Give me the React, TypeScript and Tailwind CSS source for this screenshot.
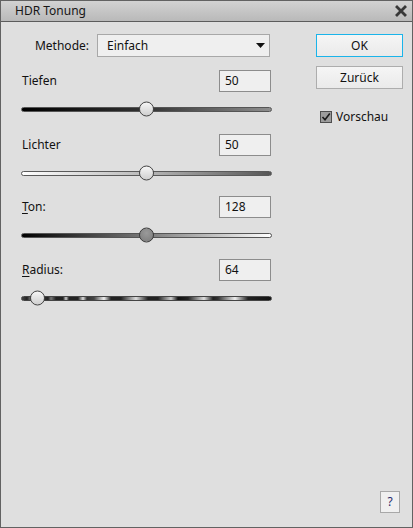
import React from "react";

const font = { fontFamily: '"Noto Sans", "Open Sans", sans-serif' };

function Thumb({ left, dark }: { left: number; dark?: boolean }) {
  return (
    <div
      className={
        "absolute top-1/2 -translate-y-1/2 w-[15px] h-[15px] rounded-full border " +
        (dark
          ? "border-[#3a3a3a] bg-[radial-gradient(circle_at_50%_35%,#9a9a9a,#7a7a7a)]"
          : "border-[#444] bg-[linear-gradient(to_bottom,#f6f6f6,#cfcfcf)]")
      }
      style={{ left }}
    />
  );
}

function Section({
  label,
  underline,
  value,
  trackClass,
  thumbLeft,
  darkThumb,
  mt,
}: {
  label: string;
  underline?: boolean;
  value: string;
  trackClass: string;
  thumbLeft: number;
  darkThumb?: boolean;
  mt: string;
}) {
  return (
    <div className={"flex flex-col " + mt}>
      <div className="flex items-center justify-between pr-[2px] h-[22px]">
        <span className="text-[12px] text-[#111] pl-[1px]">
          {underline ? (
            <>
              <span className="underline underline-offset-2">{label[0]}</span>
              {label.slice(1)}
            </>
          ) : (
            label
          )}
        </span>
        <div className="w-[52px] h-[22px] bg-[#efefef] border border-[#8c8c8c] text-[12px] text-[#111] pl-[5px] leading-[19px]">
          {value}
        </div>
      </div>
      <div className="relative h-[16px] mt-[9px] flex items-center">
        <div className={"w-[251px] h-[5px] rounded-full " + trackClass} />
        <Thumb left={thumbLeft} dark={darkThumb} />
      </div>
    </div>
  );
}

export default function App() {
  return (
    <div
      className="w-[413px] h-[528px] flex flex-col bg-[#dfdfdf] border border-[#626262] overflow-hidden"
      style={font}
    >
      {/* Title bar */}
      <div className="h-[21px] shrink-0 flex items-center justify-between bg-[linear-gradient(to_bottom,#d2d2d2,#b9b9b9)] border-b border-[#5c5c5c] pl-[14px] pr-[4px]">
        <span className="text-[12px] text-[#161616]">HDR Tonung</span>
        <svg width="12" height="12" viewBox="0 0 12 12" className="mr-[1px]">
          <path d="M2 2 L10 10 M10 2 L2 10" stroke="#383838" strokeWidth="2.8" strokeLinecap="square" />
        </svg>
      </div>

      {/* Body */}
      <div className="flex flex-1">
        {/* Left column */}
        <div className="flex flex-col pl-[20px] pt-[12px] w-[272px]">
          <div className="flex items-center h-[23px]">
            <span className="w-[68px] text-right text-[12px] text-[#111]">Methode:</span>
            <div className="ml-[8px] w-[173px] h-[23px] bg-[#efefef] border border-[#a8a8a8] flex items-center justify-between pl-[9px] pr-[4px]">
              <span className="text-[12px] text-[#111]">Einfach</span>
              <svg width="9" height="5" viewBox="0 0 9 5">
                <path d="M0 0 H9 L4.5 5 Z" fill="#111" />
              </svg>
            </div>
          </div>

          <Section
            label="Tiefen"
            value="50"
            mt="mt-[13px]"
            trackClass="border border-[#555] bg-[linear-gradient(to_right,#000,#333_50%,#8e8e8e)]"
            thumbLeft={118}
          />
          <Section
            label="Lichter"
            value="50"
            mt="mt-[17px]"
            trackClass="border border-[#5a5a5a] bg-[linear-gradient(to_right,#fff,#b8b8b8_50%,#555)]"
            thumbLeft={118}
          />
          <Section
            label="Ton:"
            underline
            value="128"
            mt="mt-[15px]"
            trackClass="border border-[#555] bg-[linear-gradient(to_right,#000,#7a7a7a_50%,#fff)]"
            thumbLeft={118}
            darkThumb
          />
          <Section
            label="Radius:"
            underline
            value="64"
            mt="mt-[16px]"
            trackClass="border border-[#444] bg-[linear-gradient(to_right,#444_0px,#222_5px,#666_8px,#222_26px,#777_29px,#222_34px,#222_41px,#ccc_44px,#222_47px,#222_56px,#ddd_61px,#333_65px,#444_72px,#f0f0f0_82px,#222_89px,#222_99px,#ddd_114px,#222_126px,#222_136px,#ccc_149px,#111_156px,#222_166px,#e0e0e0_182px,#222_191px,#333_196px,#eee_213px,#222_226px,#111_251px)]"
            thumbLeft={9}
          />
        </div>

        {/* Right column */}
        <div className="flex flex-col ml-[43px] pt-[12px]">
          <div className="w-[87px] h-[23px] border border-[#1ab4ea] bg-[linear-gradient(to_bottom,#f5f5f5,#eaeaea)] flex items-center justify-center text-[12px] text-[#111]">
            OK
          </div>
          <div className="mt-[9px] w-[87px] h-[23px] border border-[#adadad] bg-[linear-gradient(to_bottom,#f5f5f5,#eaeaea)] flex items-center justify-center text-[12px] text-[#111]">
            Zurück
          </div>
          <div className="mt-[19px] ml-[4px] flex items-center gap-[4px]">
            <div className="w-[12px] h-[12px] border border-[#4e4e4e] bg-[#9c9c9c] flex items-center justify-center">
              <svg width="10" height="10" viewBox="0 0 10 10">
                <path d="M1.5 5 L4 7.8 L8.8 1.5" stroke="#1a1a1a" strokeWidth="1.6" fill="none" />
              </svg>
            </div>
            <span className="text-[12px] text-[#111]">Vorschau</span>
          </div>
        </div>
      </div>

      {/* Bottom help */}
      <div className="flex justify-end pr-[12px] pb-[14px]">
        <div className="w-[20px] h-[22px] border border-[#a8a8a8] bg-[#f0f0f0] flex items-center justify-center text-[12px] text-[#2a2a6a]">
          ?
        </div>
      </div>
    </div>
  );
}
